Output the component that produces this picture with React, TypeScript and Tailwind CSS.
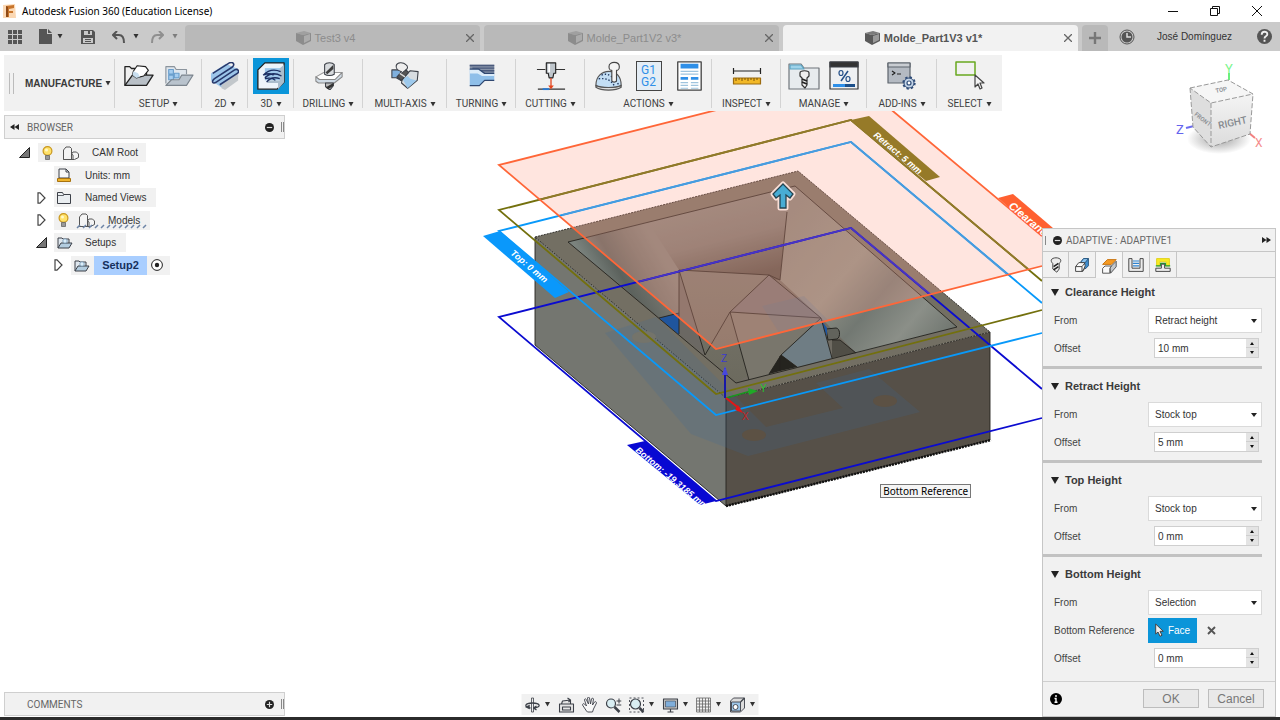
import type { ReactNode } from "react";

function Caret({ className = "" }: { className?: string }) {
  return (
    <svg viewBox="0 0 6 5" className={`h-[5px] w-[6px] shrink-0 ${className}`} aria-hidden="true">
      <path d="M.5 0h5L3 4.500z" fill="#333" />
    </svg>
  );
}

function Icon({ box = "0 0 32 32", className = "h-7 w-7", children }: { box?: string; className?: string; children: ReactNode }) {
  return (
    <svg viewBox={box} className={`shrink-0 ${className}`} fill="none" stroke="#3c4048" strokeWidth="1.2" strokeLinejoin="round" aria-hidden="true">
      {children}
    </svg>
  );
}

function FolderSetup() {
  return (
    <>
      <path d="M1 26V6h5l2 2h4M24 11v4" fill="none" stroke="#222" strokeWidth="1.400" />
      <path d="m1 26 8-11h22l-7 11z" fill="#b9c0c7" stroke="#222" strokeWidth="1.400" />
      <path d="m10 11 4-6 9 1 3 4-5 6-8 2-4-3z" fill="#fff" stroke="#222" />
      <path d="m10 11 5 2 2 4-4 1-4-3z" fill="#c9dff0" stroke="none" />
    </>
  );
}

function DrillBit() {
  return (
    <>
      <path d="m1 17 9-5h21l-8 8H5z" fill="#fdfdfd" stroke="#999" />
      <path d="M1 17v5l3 2h18l9-7v-5l-8 8H5z" fill="#d0dbe5" stroke="#888" />
      <path d="M11 3c2-3 9-3 11 0v11c-3 2-8 2-11 0z" fill="#d8dbde" />
      <path d="m12 12 9-9v5l-7 6z" fill="#3d3d3d" stroke="none" />
      <path d="M12 24h9v3l-4 5-5-4z" fill="#bbb" />
      <path d="m12 29 9-5v3l-6 4z" fill="#333" stroke="none" />
    </>
  );
}

function Cube({ muted = false }: { muted?: boolean }) {
  return (
    <svg viewBox="0 0 15 15" className="h-[15px] w-[15px] shrink-0" aria-hidden="true">
      <path d="M0 2 8 0l7 2-8 2z" fill={muted ? "#a0a0a0" : "#7b7b7b"} />
      <path d="m0 2 7 2v10L0 10z" fill={muted ? "#8c8c8c" : "#595959"} />
      <path d="M7 4 15 2v8l-8 4z" fill={muted ? "#8c8c8c" : "#595959"} />
      <path d="m8 5 6-2v6l-6 3z" fill={muted ? "#acacac" : "#999"} />
    </svg>
  );
}

function Group({ label, width, children, last }: { label: string; width: string; children: ReactNode; last?: boolean }) {
  return (
    <div className={`relative flex flex-col items-center ${width}`}>
      <div className="flex h-[43px] items-center justify-center gap-2 pb-px">{children}</div>
      <button type="button" className="flex items-center gap-[3px] font-[Roboto,sans-serif] text-[10px] leading-[14px] text-[#3f3f3f]">
        {label}
        <Caret />
      </button>
      {!last && <span className="absolute right-0 top-1 h-[49px] w-px bg-[#d3d3d3]" />}
    </div>
  );
}

function Tool({ name, active, children }: { name: string; active?: boolean; children: ReactNode }) {
  return (
    <button type="button" aria-label={name} className={`flex items-center justify-center ${active ? "h-[36px] w-[36px] bg-[#0b95d9]" : "h-8 w-8"}`}>
      {children}
    </button>
  );
}

function TitleBar() {
  return (
    <header className="flex h-[22px] shrink-0 items-center bg-white pl-[3px] text-[10px] text-black">
      <svg viewBox="0 0 14 14" className="h-[14px] w-[14px]" aria-hidden="true">
        <path d="M0 1 12 0l1 14H0z" fill="#fbd8b4" />
        <path d="m3 2 8-1v3l-5 1v2h4v2H6v4H3z" fill="#c7742b" />
        <path d="m3 2 2 1v10H3z" fill="#8e4a17" />
      </svg>
      <h1 className="pl-[5px] font-['Noto_Sans',sans-serif]">Autodesk Fusion 360 (Education License)</h1>
      <div className="ml-auto flex items-center gap-[32px] pr-[18px]">
        <button type="button" aria-label="Minimize">
          <svg viewBox="0 0 10 10" className="h-[10px] w-[10px]"><path d="M0 5.500h10" stroke="#111" /></svg>
        </button>
        <button type="button" aria-label="Restore">
          <svg viewBox="0 0 10 10" className="h-[10px] w-[10px]" fill="none" stroke="#111"><path d="M.5 2.500h7v7h-7zM2.500 2.500v-2h7v7h-2" /></svg>
        </button>
        <button type="button" aria-label="Close">
          <svg viewBox="0 0 10 10" className="h-[10px] w-[10px]"><path d="m0 0 10 10M10 0 0 10" stroke="#111" /></svg>
        </button>
      </div>
    </header>
  );
}

function Tab({ title, active }: { title: string; active?: boolean }) {
  return (
    <div className={`flex h-[26px] flex-1 items-center rounded-t-[4px] pr-[6px] text-[11px] ${active ? "bg-[#f2f2f2] font-bold text-[#555]" : "bg-[#b9b9b9] text-[#8c8c8c]"}`}>
      <button type="button" className="flex flex-1 items-center justify-center gap-1">
        <Cube muted={!active} />
        {title}
      </button>
      <button type="button" aria-label={`Close ${title}`}>
        <svg viewBox="0 0 8 8" className="h-2 w-2"><path d="m0 0 8 8M8 0 0 8" stroke="#666" strokeWidth="1.300" /></svg>
      </button>
    </div>
  );
}

function TabBar() {
  return (
    <nav className="flex h-[29px] shrink-0 items-end bg-[#cacaca]">
      <div className="flex h-[29px] w-[185px] items-center pl-2 text-[#555]">
        <button type="button" aria-label="Data panel">
          <svg viewBox="0 0 14 14" className="h-[14px] w-[14px]" fill="#555"><path d="M0 0h4v4H0zM5 0h4v4H5zM10 0h4v4h-4zM0 5h4v4H0zM5 5h4v4H5zM10 5h4v4h-4zM0 10h4v4H0zM5 10h4v4H5zM10 10h4v4h-4z" /></svg>
        </button>
        <button type="button" aria-label="File" className="ml-[17px] flex items-center gap-[5px]">
          <svg viewBox="0 0 13 15" className="h-[15px] w-[13px]"><path d="M0 0h8v5h5v10H0zM9 0l4 4H9z" fill="#555" /></svg>
          <Caret />
        </button>
        <button type="button" aria-label="Save" className="ml-[18px]">
          <svg viewBox="0 0 14 14" className="h-[14px] w-[14px]"><path fillRule="evenodd" d="M0 0h12l2 2v12H0zM3 1v4h8V1H9v3H7V1zM2 8v5h10V8zM4 9h6v1H4zM4 11h6v1H4z" fill="#555" /></svg>
        </button>
        <button type="button" aria-label="Undo" className="ml-[17px] flex items-center gap-2">
          <svg viewBox="0 0 13 12" className="h-3 w-[13px]" fill="none" stroke="#555" strokeWidth="2"><path d="M5 0 1 4l4 4M1 4h6c3 0 5 2 5 8" /></svg>
          <Caret />
        </button>
        <button type="button" aria-label="Redo" className="ml-3 flex items-center gap-2 opacity-50">
          <svg viewBox="0 0 13 12" className="h-3 w-[13px]" fill="none" stroke="#555" strokeWidth="2"><path d="m8 0 4 4-4 4M12 4H6C3 4 1 6 1 12" /></svg>
          <Caret />
        </button>
      </div>
      <div className="flex flex-1 gap-1">
        <Tab title="Test3 v4" />
        <Tab title="Molde_Part1V2 v3*" />
        <Tab title="Molde_Part1V3 v1*" active />
      </div>
      <button type="button" aria-label="New tab" className="ml-1 flex h-[26px] w-[26px] items-center justify-center rounded-t-[4px] bg-[#b9b9b9]">
        <svg viewBox="0 0 12 12" className="h-3 w-3"><path d="M6 0v12M0 6h12" stroke="#777" strokeWidth="2.400" /></svg>
      </button>
      <div className="flex h-[29px] w-[172px] items-center text-[10px] text-[#333]">
        <button type="button" aria-label="Job status" className="ml-[11px]">
          <svg viewBox="0 0 16 16" className="h-4 w-4" fill="none" stroke="#555"><circle cx="8" cy="8" r="7" /><circle cx="8" cy="8" r="5.500" fill="#555" stroke="none" /><path d="M8 4v4h4" stroke="#ddd" strokeWidth="1.500" /></svg>
        </button>
        <button type="button" className="ml-[22px] whitespace-nowrap">José Domínguez</button>
        <button type="button" aria-label="Help" className="ml-auto mr-2">
          <svg viewBox="0 0 16 16" className="h-[15px] w-[15px]"><circle cx="8" cy="8" r="8" fill="#555" /><path d="M5 6c0-4 6-4 6-.5C11 8 8 7.500 8 10M8 11.500v2" fill="none" stroke="#eee" strokeWidth="2" /></svg>
        </button>
      </div>
    </nav>
  );
}

function Toolbar() {
  return (
    <div className="ml-1 mt-1 flex h-[56px] w-max shrink-0 bg-[#f1f1f1]">
      <div className="relative flex w-[111px] items-center pt-px">
        <span className="ml-[5px] h-[21px] w-[5px] border-x border-[#bbb]" />
        <button type="button" className="ml-[11px] flex items-center gap-[3px] text-[10px] font-bold text-[#3a3a3a]">
          MANUFACTURE
          <Caret />
        </button>
        <span className="absolute right-0 top-1 h-[49px] w-px bg-[#d3d3d3]" />
      </div>
      <Group label="SETUP" width="w-[87px]">
        <Tool name="New setup"><Icon className="h-[30px] w-[30px]"><FolderSetup /></Icon></Tool>
        <Tool name="New folder">
          <Icon className="h-[30px] w-[30px]">
            <path d="M2 24V6h9l2 3h11v5" fill="#dfe6ed" stroke="#8b949d" />
            <path d="M5 9h5v5H5zM5 15h5v5H5zM11 13h5v5h-5z" fill="#a5cdef" stroke="#6b9fcc" />
            <path d="m2 26 6-6h8l3-5h12l-7 11z" fill="#b9c3cd" stroke="#7b848d" />
          </Icon>
        </Tool>
      </Group>
      <Group label="2D" width="w-[46px]">
        <Tool name="2D operations">
          <Icon>
            <path d="M0 13 17 2l14 6v9L12 29 0 21z" fill="#9cc5e9" stroke="none" />
            <path d="m12 26 19-13v8L16 32l-4-2z" fill="#c2c7cb" stroke="none" />
            <path d="M2 13 21 1c4-2 7 2 3 5L4 19c-4 3-2 7 2 4L27 9c4-2 6 2 3 4L10 26" stroke="#27386b" strokeWidth="1.800" />
          </Icon>
        </Tool>
      </Group>
      <Group label="3D" width="w-[46px]">
        <Tool name="3D operations" active>
          <Icon>
            <path d="m1 9 8-8h22v22l-8 8H1z" fill="#edf4fa" stroke="#222" strokeWidth="1.500" />
            <path d="M9 7h19v14H9z" fill="#9fc8ea" stroke="none" />
            <path d="m24 31 7-8V3l-5 4v14H12v3h12z" fill="#aabdcc" stroke="none" />
            <path d="M7 15c6-6 13-7 20-4M9 18c5-5 12-6 19-2M11 23c4-5 9-6 15-4M7 15c5-2 9-2 12 0M9 19c5-1 9-1 12 2" stroke="#1c2f62" strokeWidth="1.600" />
          </Icon>
        </Tool>
      </Group>
      <Group label="DRILLING" width="w-[69px]">
        <Tool name="Drill"><Icon><DrillBit /></Icon></Tool>
      </Group>
      <Group label="MULTI-AXIS" width="w-[84px]">
        <Tool name="Multi-axis">
          <Icon>
            <path d="M1 9h10v12l-5-3H1z" fill="#7fb0de" />
            <path d="m13 18 9-8 9 1-1 10-11 9-7-6z" fill="#d8dde1" />
            <path d="m13 19 6 11 10-9-7-2-3-3z" fill="#9dc9ec" stroke="none" />
            <path d="M6 4c1-4 8-4 11-1 3 2 2 5 0 6l3 3-8 9-5-4 5-6C9 10 5 8 6 4z" fill="#eee" />
            <path d="m7 17 5 4 8-9-3-3z" fill="#555" />
            <path d="m10 13 6 4" stroke="#ddd" strokeWidth="1.600" />
          </Icon>
        </Tool>
      </Group>
      <Group label="TURNING" width="w-[69px]">
        <Tool name="Turning">
          <Icon>
            <path d="M2 3h28v10H19L12 7H2z" fill="#8793a8" stroke="none" />
            <path d="M2 4h28M5 7h25M14 10h16" stroke="#4a5a7c" strokeWidth="1.500" />
            <path d="M2 8h10l7 5h11v8H19l-6 6H2z" fill="#8fbfe9" stroke="none" />
            <path d="M2 8h10l7 5h11v3H16l-5-3H2z" fill="#dcecf9" stroke="none" />
            <path d="M2 8h10l7 5h11M30 21H19l-6 6H2" stroke="#2f4770" strokeWidth="1.500" />
          </Icon>
        </Tool>
      </Group>
      <Group label="CUTTING" width="w-[69px]">
        <Tool name="Cutting">
          <Icon className="h-[30px] w-[30px]">
            <path d="M1 9h9M21 9h10M2 30h29" stroke="#333" />
            <path d="M11 2h10v11h-2l-1 5h-4l-1-5h-2z" fill="#bfc6cc" stroke="#222" />
            <path d="M13 3h2v9h-2z" fill="#fff" stroke="none" />
            <path d="M16 18v10" stroke="#e4461f" strokeWidth="1.400" />
            <path d="m13 26 3 4 3-4z" fill="#e4461f" stroke="none" />
            <path d="M7 30h7" stroke="#2c7ad0" strokeWidth="2" />
          </Icon>
        </Tool>
      </Group>
      <Group label="ACTIONS" width="w-[127px]">
        <Tool name="Simulate">
          <Icon className="h-[30px] w-[30px]">
            <path d="M2 26c0-9 6-15 14-15s13 6 13 15c-5 4-22 4-27 0z" fill="#c3def4" stroke="#555" />
            <path d="M2 26c6 3 21 3 27 0v2c-6 4-21 4-27 0z" fill="#ddd" stroke="#555" />
            <path d="M8 15c7-3 13 2 18 10M5 19c8-1 13 1 17 8" stroke="#1c355e" strokeWidth="1.500" strokeDasharray="1.500 2" />
            <path d="M16 6c0-6 11-6 11 0 0 3-2 4-3 4v11c-1 2-4 2-5 0V10c-1 0-3-1-3-4z" fill="#f4f4f4" stroke="#444" />
          </Icon>
        </Tool>
        <Tool name="Post process">
          <span className="flex h-[30px] w-[26px] flex-col items-center justify-center border border-[#444] bg-[#e4edf5] font-[Roboto,sans-serif] text-[12px] leading-[12px] text-[#2e8fe8]">
            <span>G1</span>
            <span>G2</span>
          </span>
        </Tool>
        <Tool name="Setup sheet">
          <Icon className="h-[30px] w-[30px]">
            <path d="M4 1h25v30H4z" fill="#fff" stroke="#444" strokeWidth="1.400" />
            <path d="M7 3h19v5H7zM7 17h8v3H7zM18 17h8v3h-8z" fill="#2e8fe8" stroke="none" />
            <path d="M7 11h19M7 14h19M7 23h8M18 23h8M7 26h8M18 26h8M7 29h8M18 29h8" stroke="#9fc4de" />
          </Icon>
        </Tool>
      </Group>
      <Group label="INSPECT" width="w-[69px]">
        <Tool name="Measure">
          <Icon className="h-8 w-8">
            <path d="M3 11h26M2.500 8v6M29.500 8v6" stroke="#222" />
            <path d="M2.500 18h27v6h-27z" fill="#f2b827" stroke="#9c6c11" />
            <path d="M5 18v3M8 18v2M11 18v3M14 18v2M17 18v3M20 18v2M23 18v3M26 18v2" stroke="#7a5208" strokeWidth="1" />
          </Icon>
        </Tool>
      </Group>
      <Group label="MANAGE" width="w-[86px]">
        <Tool name="Tool library">
          <Icon className="h-8 w-8">
            <path d="M1 29V4h12l3 4h15v21z" fill="#e7ebee" stroke="#6f757b" />
            <path d="M2 5h11l3 4H2z" fill="#9fd3ea" stroke="#5da4c2" />
            <path d="M12 13c0-3 9-3 9 0v3l-2 2v7l-2 3-3-3v-7l-2-2z" fill="#eee" stroke="#333" />
            <path d="m14 19 5 2M14 22l5 2" stroke="#222" strokeWidth="1.700" />
          </Icon>
        </Tool>
        <Tool name="Template library">
          <Icon className="h-8 w-8">
            <path d="M2 2h28v27H2z" fill="#eef0f2" stroke="#333" />
            <path d="M2 2h28v5H2z" fill="#333" />
            <path d="M5 24h12v3H5z" fill="#2e8fe8" stroke="none" />
            <path d="M17 24h10v3H17z" fill="#1b4f8a" stroke="none" />
            <path d="m20 11-7 10" strokeWidth="1.500" stroke="#244f88" />
            <ellipse cx="13" cy="13" rx="2" ry="2.500" stroke="#244f88" />
            <ellipse cx="20" cy="19" rx="2" ry="2.500" stroke="#244f88" />
          </Icon>
        </Tool>
      </Group>
      <Group label="ADD-INS" width="w-[70px]">
        <Tool name="Scripts and add-ins">
          <Icon className="h-8 w-8">
            <path d="M2 3h22v20H2z" fill="#b4bac2" stroke="#5d646d" />
            <path d="M2 3h22v4H2z" fill="#c9cdd2" stroke="#5d646d" />
            <path d="m6 11 3 2-3 2M11 14h4" stroke="#222" />
            <circle cx="23" cy="23" r="5" fill="#c4d5e8" stroke="#2f4c78" strokeWidth="1" />
            <circle cx="23" cy="23" r="5.800" stroke="#2f4c78" strokeWidth="1.800" strokeDasharray="2.300 2.250" />
            <circle cx="23" cy="23" r="2" fill="#fff" stroke="#2f4c78" />
          </Icon>
        </Tool>
      </Group>
      <Group label="SELECT" width="w-[65px]" last>
        <Tool name="Select">
          <Icon className="h-8 w-8">
            <path d="M2 2h19v13H2z" stroke="#68a81f" strokeWidth="1.500" />
            <path d="M21 15v12l3-3 2 5 2-1-2-5h4z" fill="#f4f4f4" stroke="#444" />
          </Icon>
        </Tool>
      </Group>
    </div>
  );
}

function Scene() {
  return (
    <svg viewBox="0 111 1280 606" className="absolute inset-0 h-full w-full" role="img" aria-label="Mould model with machining height planes">
      <defs>
        <linearGradient id="wallLeft" gradientUnits="userSpaceOnUse" x1="590" y1="270" x2="650" y2="235">
          <stop offset="0" stopColor="#7b837e" />
          <stop offset=".35" stopColor="#5c625d" />
          <stop offset=".7" stopColor="#73736c" />
          <stop offset="1" stopColor="#807f78" />
        </linearGradient>
        <linearGradient id="wallBack" gradientUnits="userSpaceOnUse" x1="690" y1="205" x2="710" y2="285">
          <stop offset="0" stopColor="#83827b" />
          <stop offset=".5" stopColor="#7a7770" />
          <stop offset="1" stopColor="#575149" />
        </linearGradient>
        <linearGradient id="wallRight" gradientUnits="userSpaceOnUse" x1="785" y1="220" x2="940" y2="350">
          <stop offset="0" stopColor="#84837a" />
          <stop offset=".4" stopColor="#8e8f84" />
          <stop offset=".6" stopColor="#727872" />
          <stop offset=".8" stopColor="#8b8f88" />
          <stop offset="1" stopColor="#6e746e" />
        </linearGradient>
        <linearGradient id="cone" x1="0" y1="0" x2="0" y2="1">
          <stop offset="0" stopColor="#77756c" />
          <stop offset="1" stopColor="#6c6a5e" />
        </linearGradient>
      </defs>
      <polygon points="535,237 726,398 726,506 535,345" fill="#747670" />
      <polygon points="726,398 990,332 990,440 726,506" fill="#565048" />
      <polygon points="535,237 798,171 990,332 726,398" fill="#736f63" />
      <polygon points="568,242 795,186 957,327 736,383" fill="#6f6b62" />
      <polygon points="568,242 795,186 787,212 780,280 679,270 679,334" fill="url(#wallBack)" />
      <polygon points="568,242 648,222 679,270 679,334" fill="url(#wallLeft)" />
      <polygon points="795,186 957,327 856,353 821,318 780,280 787,212" fill="url(#wallRight)" />
      <polygon points="659,318 679,313 679,335" fill="#1f559e" />
      <polygon points="679,270 769,275 821,318 780,356 736,383 705,355 679,334" fill="url(#cone)" />
      <polygon points="769,275 821,318 730,312" fill="#74706f" />
      <polygon points="730,312 821,318 780,356 770,374 749,380" fill="#79766c" />
      <polygon points="679,270 705,355 679,334" fill="#6b6863" />
      <polygon points="821,318 832,358 798,367 781,355" fill="#6f7d84" />
      <polygon points="781,355 797,367 780,371 769,374" fill="#25241f" />
      <polygon points="832,340 840,340 856,353 832,358" fill="#504e46" />
      <path d="M826 329l10-1c4 0 5 9 1 11l-9 1z" fill="#62635c" stroke="#252521" />
      <path d="m822 321 5 7v8l-3-6z" fill="#1f559e" />
      <g stroke="#24221e" strokeWidth=".9" fill="none">
        <path d="M679 334v-64l90 5 52 43-91-6 39-37M679 270l26 85 25-43 19 68M821 318l-40 37-12 19M821 318l11 40M781 355l16 12M780 356v15M787 212l-7 68M832 340h8l16 13M659 318l20-5M769 275l11 5" />
        <path d="M568 242 795 186 957 327 736 383z" />
        <path d="M535 237 798 171l192 161-264 66z" strokeDasharray="2 1" />
        <path d="M535 237v108l191 161V398M990 332v108l-264 66" />
      </g>
      <path d="m726 506 265-66" stroke="#111" strokeWidth="2.500" strokeDasharray="2 1" />
      <g fill="#386b9f" opacity=".18">
        <path d="m605 333 51-16 92 92 18 18 77-19-27-25 53-14 51 43-172 44-57-22z" />
        <path d="m762 306 42-10 24 24-48 14z" />
      </g>
      <g fill="#5c5144">
        <ellipse cx="885" cy="401" rx="12" ry="6" />
        <ellipse cx="754" cy="435" rx="12" ry="6" />
        <ellipse cx="644" cy="337" rx="12" ry="6" fill="#74746b" />
      </g>
      <polygon points="499,165 851,76 1042,236 1042,266 716,349" fill="#ffa28c" fillOpacity=".28" />
      <g fill="none" strokeWidth="1.800">
        <path d="M1042 389 851 228 499 317l217 184 326-83" stroke="#0b0bd0" />
        <path d="m637 282 214-54 80 67" stroke="#4934c4" />
        <path d="M1042 303 851 142 499 231l217 184 326-82" stroke="#0899fa" />
        <path d="M1007 274 851 142 562 215" stroke="#4b9bdc" />
        <path d="M1042 281 851 120 499 210l217 184 326-84" stroke="#73700d" />
        <path d="M1028 269 851 120 538 200" stroke="#92792a" />
        <path d="M1042 236 851 76 499 165l217 184 326-83" stroke="#ff6638" />
      </g>
      <polygon points="483,236 500,231 569,292 555,298" fill="#0a98fb" />
      <polygon points="851,120 869,116 940,177 926,181" fill="#967a28" />
      <polygon points="998,198 1013,194 1060,234 1044,238" fill="#ff6030" />
      <polygon points="627,445 645,441 716,501 700,505" fill="#0808d2" />
      <g fill="#fff" fontFamily="Liberation Sans, sans-serif" fontWeight="bold" fontStyle="italic">
        <text transform="translate(510 254) rotate(40)" fontSize="9">Top: 0 mm</text>
        <text transform="translate(873 136) rotate(40)" fontSize="9">Retract: 5 mm</text>
        <text transform="translate(1008 207) rotate(40)" fontSize="11">Clearance</text>
        <text transform="translate(635 451) rotate(40)" fontSize="9">Bottom: -19.3185 mm</text>
      </g>
      <g strokeWidth="1.500" fontFamily="Liberation Sans, sans-serif" fontSize="10">
        <path d="m726 398 25-7" stroke="#18961e" />
        <path d="m748 388 10 3-9 4z" fill="#20a827" />
        <path d="M725 398v-30" stroke="#1818a8" strokeWidth="2" />
        <path d="m722 375 3-9 3 9z" fill="#4747dc" />
        <path d="m726 398 14 11" stroke="#e21616" strokeWidth="2" />
        <path d="m735 410 3-5 5 8z" fill="#e21616" />
        <text x="721" y="362" fill="#3b3bcb">Z</text>
        <text x="760" y="392" fill="#25c42c">Y</text>
        <text x="742" y="420" fill="#c52222">X</text>
      </g>
      <path d="m783 184 10 10-3 4-4-3v13h-6v-13l-4 3-3-4z" fill="#48acd4" stroke="#f9ded6" strokeWidth="5" strokeLinejoin="round" />
      <path d="m783 184 10 10-3 4-4-3v13h-6v-13l-4 3-3-4z" fill="#48acd4" stroke="#234452" strokeWidth="1.300" />
    </svg>
  );
}

function ViewCube() {
  return (
    <svg viewBox="1170 55 110 105" className="absolute right-0 top-[55px] h-[105px] w-[110px]" role="img" aria-label="View cube" fontFamily="Roboto, sans-serif">
      <defs>
        <radialGradient id="cubeShadow"><stop offset="0" stopColor="#777" stopOpacity=".7" /><stop offset="1" stopColor="#777" stopOpacity="0" /></radialGradient>
        <linearGradient id="cubeSide" x1="0" y1="0" x2="0" y2="1"><stop offset="0" stopColor="#f4f4f4" /><stop offset="1" stopColor="#dcdcdc" /></linearGradient>
      </defs>
      <ellipse cx="1219" cy="139" rx="32" ry="15" fill="url(#cubeShadow)" />
      <path d="M1229 80V73" stroke="#6bf07c" strokeWidth="2" />
      <path d="m1186 128 8-2" stroke="#6c6cf0" strokeWidth="2" />
      <path d="m1249 133 6 5" stroke="#f28080" strokeWidth="2" />
      <polygon points="1190,88 1228,80 1253,94 1211,103" fill="#f6f6f6" />
      <polygon points="1190,88 1211,103 1211,147 1193,127" fill="#dedede" />
      <polygon points="1211,103 1253,94 1250,134 1211,147" fill="url(#cubeSide)" />
      <path d="m1190 88 38-8 25 14-42 9zM1190 88l3 39 18 20 39-13 3-40M1211 103v44" fill="none" stroke="#999" strokeDasharray="5 2" />
      <text transform="translate(1219 129) rotate(-12)" fontSize="10" fontWeight="500" fill="#85898e">RIGHT</text>
      <text transform="translate(1194 115) rotate(38)" fontSize="6" fontWeight="600" fill="#8b8f94">FRONT</text>
      <text transform="translate(1216 93) rotate(-12)" fontSize="6" fontWeight="600" fill="#8b8f94">TOP</text>
      <text x="1225" y="73" fontSize="13" fill="#7df58c">Y</text>
      <text x="1176" y="134" fontSize="13" fill="#6464ee">Z</text>
      <text x="1255" y="147" fontSize="12" fill="#f58b8b">X</text>
    </svg>
  );
}

function Bulb() {
  return (
    <Icon box="0 0 11 14" className="h-[14px] w-[11px]">
      <circle cx="5.500" cy="5" r="4.400" fill="#ffe26a" stroke="#c9971d" />
      <path d="M3.500 9.500h4v4h-4z" fill="#999" stroke="#666" strokeWidth=".8" />
      <circle cx="4.500" cy="4" r="1.500" fill="#fff8c9" stroke="none" />
    </Icon>
  );
}

function Bodies() {
  return (
    <Icon box="0 0 16 14" className="h-[14px] w-4">
      <path d="M.5 4 3 1h4l1.500 1.500v11h-8zM.5 13.500h11l4-2V8l-2-2H10L8.500 8M10 13V9l-1.500-1" fill="#f4f4f4" stroke="#555" strokeWidth="1" />
    </Icon>
  );
}

function SmallFolder() {
  return (
    <Icon box="0 0 16 13" className="h-[13px] w-4">
      <path d="M1 12V2h4l1 1h6v4" fill="#dfe7ee" strokeWidth="1" />
      <path d="m1 12 3-5h11l-3 5z" fill="#b3cde0" strokeWidth="1" />
      <circle cx="8" cy="5" r="2.200" fill="#dceefa" stroke="#6f93b0" strokeWidth=".8" />
    </Icon>
  );
}

function Expander({ open }: { open?: boolean }) {
  return (
    <button type="button" aria-label={open ? "Collapse" : "Expand"} className="flex w-[11px] shrink-0 justify-center">
      {open ? (
        <svg viewBox="0 0 11 11" className="h-[11px] w-[11px]"><path d="M10.500.5v10H.5z" fill="#777" stroke="#222" /></svg>
      ) : (
        <svg viewBox="0 0 9 12" className="h-3 w-[9px]"><path d="M1 .8h2l5 5.200-5 5.200H1z" fill="#fff" stroke="#444" strokeWidth="1.200" /></svg>
      )}
    </button>
  );
}

function DockHeader({ title, collapse, open }: { title: string; collapse?: boolean; open?: boolean }) {
  return (
    <div className="flex h-[24px] items-center border border-[#cfcfcf] bg-[#f1f1f1] font-[Roboto,sans-serif] text-[10px] text-[#666]">
      <span className="flex w-[22px] justify-center pr-1">
        {collapse && <svg viewBox="0 0 9 6" className="h-[6px] w-[9px]"><path d="M4.500 0v6L0 3zM9 0v6L4.500 3z" fill="#222" /></svg>}
      </span>
      <h2>{title}</h2>
      <button type="button" aria-label={open ? `Minimize ${title}` : `Expand ${title}`} className="ml-auto mr-[7px]">
        <svg viewBox="0 0 10 10" className="h-[9px] w-[9px]"><circle cx="5" cy="5" r="5" fill="#222" /><path d={open ? "M2 5h6" : "M2 5h6M5 2v6"} stroke="#ddd" strokeWidth="1.300" /></svg>
      </button>
      <span className="h-[10px] w-[3px] border-x border-[#888]" />
    </div>
  );
}

function Browser() {
  return (
    <aside className="absolute left-1 top-1 w-[281px] text-[10px] text-[#333]">
      <DockHeader title="BROWSER" collapse open />
      <ul className="mt-1 flex h-[132px] flex-col justify-between">
        <li className="flex items-center pl-[15px]">
          <Expander open />
          <span className="ml-2 flex h-[19px] items-center bg-[#f1f1f1] pl-1 pr-2"><Bulb /><span className="ml-[10px] flex"><Bodies /></span><span className="ml-[13px]">CAM Root</span></span>
        </li>
        <li className="flex items-center pl-[50px]">
          <span className="flex h-[19px] items-center bg-[#f1f1f1] pl-[3px] pr-[10px]">
            <Icon box="0 0 14 14" className="h-[14px] w-[14px]">
              <path d="M2 10V1h7l3 3v6z" fill="#f7f7f7" strokeWidth="1" /><path d="M9 1v3h3" strokeWidth="1" /><path d="M.5 10.500h13v3H.5z" fill="#f0b42c" stroke="#a8730f" strokeWidth="1" />
            </Icon>
            <span className="ml-[14px]">Units: mm</span>
          </span>
        </li>
        <li className="flex items-center pl-[32px]">
          <Expander />
          <span className="ml-[7px] flex h-[19px] items-center bg-[#f1f1f1] pl-[3px] pr-[9px]">
            <Icon box="0 0 14 12" className="h-3 w-[14px]"><path d="M.5 11.500V.5h5l1 2h7v9z" fill="#e9edf0" strokeWidth="1" /><path d="M.5 3.500h6l1-1" strokeWidth=".8" /></Icon>
            <span className="ml-[14px]">Named Views</span>
          </span>
        </li>
        <li className="flex items-center pl-[32px]">
          <Expander />
          <span className="relative ml-[7px] flex h-[19px] items-center bg-[#f1f1f1] pl-1 pr-[10px]">
            <Bulb /><span className="ml-[10px] flex"><Bodies /></span><span className="ml-[13px]">Models</span>
            <svg viewBox="0 0 72 5" className="absolute bottom-px right-[2px] h-[5px] w-[72px]" aria-hidden="true"><path d="m1 4 3-3m3 3 3-3m3 3 3-3m3 3 3-3m3 3 3-3m3 3 3-3m3 3 3-3m3 3 3-3m3 3 3-3m3 3 3-3m3 3 3-3m3 3 3-3" stroke="#6d84a6" strokeWidth="1.500" /></svg>
          </span>
        </li>
        <li className="flex items-center pl-[32px]">
          <Expander open />
          <span className="ml-[7px] flex h-[19px] items-center bg-[#f1f1f1] pl-[3px] pr-[10px]"><SmallFolder /><span className="ml-3">Setups</span></span>
        </li>
        <li className="flex items-center pl-[49px]">
          <Expander />
          <span className="ml-[7px] flex h-[19px] items-center bg-[#f1f1f1] pl-[3px] pr-[7px]">
            <SmallFolder />
            <span className="ml-1 flex h-[19px] w-[53px] items-center justify-center bg-[#a9ceff] text-[11px] font-bold text-[#16305c]">Setup2</span>
            <svg viewBox="0 0 12 12" className="ml-1 h-3 w-3"><circle cx="6" cy="6" r="5.400" fill="#fff" stroke="#222" /><circle cx="6" cy="6" r="2.200" fill="#222" /></svg>
          </span>
        </li>
      </ul>
    </aside>
  );
}

function Section({ id, title, from, options, offset, reference, last }: { id: string; title: string; from: string; options: string[]; offset: string; reference?: boolean; last?: boolean }) {
  return (
    <section>
      <button type="button" className="flex h-7 items-center gap-[6px] pl-2 text-[11px] font-bold text-[#3b3b3b]">
        <svg viewBox="0 0 8 7" className="h-[7px] w-2"><path d="M0 0h8L4 7z" fill="#222" /></svg>
        {title}
      </button>
      <div className="flex h-7 items-center pl-[11px]">
        <label htmlFor={`${id}-from`} className="w-[94px] shrink-0">From</label>
        <span className="relative min-w-0 flex-1">
          <select id={`${id}-from`} defaultValue={from} className="h-[25px] w-full appearance-none border border-[#dadada] bg-white pl-[6px] pr-4 text-[10px] text-[#333]">
            {options.map((o) => <option key={o}>{o}</option>)}
          </select>
          <svg viewBox="0 0 6 4" className="pointer-events-none absolute right-[5px] top-[11px] h-1 w-[6px]"><path d="M0 0h6L3 4z" fill="#222" /></svg>
        </span>
      </div>
      {reference && (
        <div className="flex h-7 items-center pl-[11px]">
          <span className="w-[94px] shrink-0">Bottom Reference</span>
          <button type="button" className="flex h-[25px] w-[49px] items-center justify-center gap-1 bg-[#0b95d9] text-[10px] text-white">
            <svg viewBox="0 0 9 14" className="h-[14px] w-[9px]"><path d="M.7 1v10l2.300-2 2 4.300 2-1-2-4h3.300z" fill="#eee" stroke="#444" /></svg>
            Face
          </button>
          <button type="button" aria-label="Clear selection" className="ml-[10px]">
            <svg viewBox="0 0 9 9" className="h-[9px] w-[9px]"><path d="m1 1 7 7M8 1 1 8" stroke="#555" strokeWidth="1.900" /></svg>
          </button>
        </div>
      )}
      <div className="flex h-7 items-center pl-[11px] pr-[3px]">
        <label htmlFor={`${id}-offset`} className="w-[100px] shrink-0">Offset</label>
        <span className="flex h-5 min-w-0 flex-1 border border-[#cfcfcf] bg-white">
          <input id={`${id}-offset`} defaultValue={offset} className="min-w-0 flex-1 pl-[3px] text-[10px] text-[#333] outline-none" />
          <span className="flex w-3 shrink-0 flex-col bg-[#e4e4e4]">
            <button type="button" aria-label="Increase" className="flex h-[9px] items-center justify-center border-b border-[#cfcfcf]"><svg viewBox="0 0 4 3" className="h-[3px] w-1"><path d="M0 3h4L2 0z" fill="#111" /></svg></button>
            <button type="button" aria-label="Decrease" className="flex h-[9px] items-center justify-center"><svg viewBox="0 0 4 3" className="h-[3px] w-1"><path d="M0 0h4L2 3z" fill="#111" /></svg></button>
          </span>
        </span>
      </div>
      {!last && <hr className="mb-[3px] mt-1 h-[3px] border-0 bg-[#c2c2c2]" />}
    </section>
  );
}

function AdaptivePanel() {
  const options = ["Retract height", "Stock top", "Selection"];
  const tabs: [string, ReactNode][] = [
    ["Tool", <g key="t"><path d="M4 4c1-4 11-4 12 0 0 3-2 4-2 4v7l-3 4-5-4V8S4 7 4 4z" fill="#ececec" stroke="#444" /><path d="m7 12 6-4M7 16l6-4" stroke="#222" strokeWidth="2" /></g>],
    ["Geometry", <g key="g"><path d="m8 7 4-5h6v9l-4 4-3-3z" fill="#3f8fd0" stroke="#27557d" /><path d="m8 7 4-5h6l-4 5z" fill="#8cc4f0" stroke="#27557d" /><path d="m2 12 4-5h7l1 4-3 7H2z" fill="#fafafa" stroke="#444" /><path d="M2 12h8l4-5M10 12v6l4-4" stroke="#444" /></g>],
    ["Heights", <g key="h"><path d="M11 11h1l7-7v7l-7 8z" fill="#c4c8cc" stroke="#555" /><path d="m2 8 6-6h11l-6 6z" fill="#f59a23" stroke="#c87512" /><path d="m2 13 3-3h8l-2 3v6H2z" fill="#fafafa" stroke="#555" /></g>],
    ["Passes", <g key="p"><path d="M1 2h4v12h10V2h4v16H1z" fill="#ececec" stroke="#444" /><path d="M6 5h8M6 8h8M6 11h8" stroke="#2d83d0" strokeWidth="1.500" /></g>],
    ["Linking", <g key="l"><path d="M2 2h16v9h-4V6H6v5H2z" fill="#f7ea22" stroke="#e2d11a" /><path d="M1 11h6V8h6v3h6" stroke="#239b35" strokeWidth="1.600" /><path d="M1 14h7V9h4v5h7v4H1z" fill="#ececec" stroke="#444" /></g>],
  ];
  return (
    <aside className="absolute bottom-0 right-1 flex h-[489px] w-[234px] flex-col border border-[#c6c6c6] bg-[#f1f1f1] text-[10px] text-[#444]">
      <div className="flex h-[22px] shrink-0 items-center">
        <span className="h-[9px] w-[3px] border-r border-[#888]" />
        <button type="button" aria-label="Minimize panel" className="ml-[7px]">
          <svg viewBox="0 0 10 10" className="h-[9px] w-[9px]"><circle cx="5" cy="5" r="5" fill="#222" /><path d="M2 5h6" stroke="#ddd" strokeWidth="1.300" /></svg>
        </button>
        <h2 className="ml-1 font-[Roboto,sans-serif] text-[10px] text-[#666]">ADAPTIVE : ADAPTIVE1</h2>
        <button type="button" aria-label="Dock right" className="ml-auto mr-1">
          <svg viewBox="0 0 9 6" className="h-[6px] w-[9px]"><path d="M0 0v6l4.500-3zM4.500 0v6L9 3z" fill="#222" /></svg>
        </button>
      </div>
      <div role="tablist" className="flex h-[27px] shrink-0 border-b border-t border-[#c6c6c6]">
        {tabs.map(([name, art], i) => (
          <button key={name} type="button" role="tab" aria-label={name} aria-selected={i === 2} className={`flex items-center justify-center border-r border-[#c6c6c6] pt-px ${i === 0 ? "w-[26px]" : "w-[27px]"} ${i === 2 ? "-mb-px bg-[#f6f6f6]" : ""}`}>
            <Icon box="0 0 20 20" className="h-4 w-4">{art}</Icon>
          </button>
        ))}
      </div>
      <div className="flex-1 pr-[13px]">
        <Section id="clearance" title="Clearance Height" from="Retract height" options={options} offset="10 mm" />
        <Section id="retract" title="Retract Height" from="Stock top" options={options} offset="5 mm" />
        <Section id="top" title="Top Height" from="Stock top" options={options} offset="0 mm" />
        <Section id="bottom" title="Bottom Height" from="Selection" options={options} offset="0 mm" reference last />
      </div>
      <div className="flex h-[35px] shrink-0 items-center gap-[9px] border-t border-[#cfcfcf] pb-px pl-[7px] pr-[11px]">
        <svg viewBox="0 0 12 12" className="mr-auto h-3 w-3" role="img" aria-label="Information"><circle cx="6" cy="6" r="6" fill="#000" /><path d="M6 2v2M4.500 5.500H6V9M4.500 9.200h3" stroke="#fff" strokeWidth="1.400" fill="none" /></svg>
        <button type="button" className="h-[19px] w-[56px] border border-[#bdbdbd] bg-[#e9e9e9] text-[12px] leading-none text-[#777]">OK</button>
        <button type="button" className="h-[19px] w-[56px] border border-[#bdbdbd] bg-[#e9e9e9] text-[12px] leading-none text-[#777]">Cancel</button>
      </div>
    </aside>
  );
}

function NavItem({ name, caret, children }: { name: string; caret?: boolean; children: ReactNode }) {
  return (
    <button type="button" aria-label={name} className="flex items-center gap-1">
      <Icon box="0 0 16 16" className="h-4 w-4">{children}</Icon>
      {caret && <Caret />}
    </button>
  );
}

function NavBar() {
  return (
    <div className="absolute bottom-[2px] left-1/2 flex h-[21px] w-[237px] -translate-x-1/2 items-center justify-between bg-[#f1f1f1] px-[3px]">
      <NavItem name="Orbit" caret><path d="M7 1h2v14H7z" fill="#eee" strokeWidth=".8" /><path d="M6 11C-1 10 0 6 8 6s9 4 2 5M12 9l-3 2 3 2" strokeWidth="1.300" /><path d="m1 10 4-2v4z" fill="#3c4048" strokeWidth=".5" /></NavItem>
      <NavItem name="Look at"><path d="M1 7h14v8H1zM4 10h8v3H4zM3 7l1-3 8-1v4M9 1l3 2-2 2" fill="#e5e5e5" strokeWidth="1.100" /></NavItem>
      <NavItem name="Pan"><path d="M5 14 1 8c0-1 1-2 2-1l2 2-2-6c0-2 2-1 2 0l2 4-1-6c0-1 2-1 2 0l1 6 1-5c0-1 2-1 2 0l-1 6 2-3c1-1 2 0 2 1l-3 6-1 3H6z" fill="#f8f8f8" strokeWidth=".9" /></NavItem>
      <NavItem name="Zoom"><circle cx="5.500" cy="6.500" r="4.500" fill="#d9eef3" /><path d="m9 10 5 5" strokeWidth="2.500" /><path d="M11 4h5M13.500 1.500v5M11 8h5" strokeWidth="1" /></NavItem>
      <NavItem name="Zoom window" caret><path d="M1 1h14v14H1z" strokeDasharray="2 2" strokeWidth=".9" /><circle cx="7" cy="7" r="5" fill="#d9eef3" /><path d="m11 11 4 4" strokeWidth="2.500" /></NavItem>
      <NavItem name="Display settings" caret><path d="M1 2h14v10H1zM5 15h6M8 12v3" fill="#ccc" /><path d="M3 4h10v6H3z" fill="#7faedb" strokeWidth=".6" /></NavItem>
      <NavItem name="Grid" caret><path d="M1 1h14v14H1zM1 4h14M1 7h14M1 10h14M1 13h14M4 1v14M7 1v14M10 1v14M13 1v14" strokeWidth=".8" stroke="#666" /></NavItem>
      <NavItem name="Viewports" caret><path d="m1 4 3-3h11v10l-4 4H1z" fill="#ddd" strokeWidth=".9" /><path d="M2 5h9v9H2z" fill="#9ec7e9" strokeWidth=".9" /><circle cx="6" cy="10" r="2.500" fill="#fff" strokeWidth=".9" /><path d="m11 5 4-4" /></NavItem>
    </div>
  );
}

export default function App() {
  return (
    <div className="relative flex h-screen flex-col overflow-hidden bg-white font-['Liberation_Sans',Arial,sans-serif]">
      <TitleBar />
      <TabBar />
      <Toolbar />
      <main className="relative min-h-0 flex-1">
        <Scene />
        <Browser />
        <div role="tooltip" className="absolute left-[69%] top-[373px] -ml-[3px] whitespace-nowrap border border-[#777] bg-[#f5f5f5] px-[2px] font-['Noto_Sans',sans-serif] text-[10px] leading-3 text-black">Bottom Reference</div>
        <div className="absolute bottom-px left-1 w-[281px]"><DockHeader title="COMMENTS" /></div>
        <NavBar />
        <AdaptivePanel />
      </main>
      <ViewCube />
      <div className="h-[3px] shrink-0 bg-[#2b2b2b]" />
    </div>
  );
}
